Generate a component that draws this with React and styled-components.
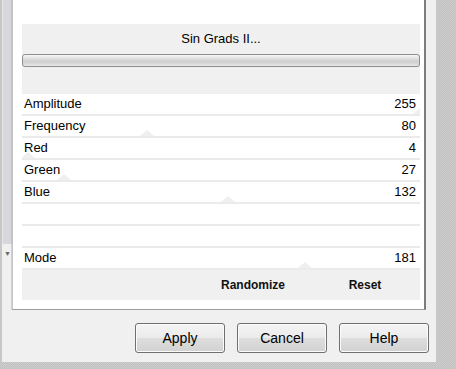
import React from "react";
import styled, { createGlobalStyle } from "styled-components";

const GlobalStyle = createGlobalStyle`
  html, body {
    margin: 0;
    padding: 0;
  }
  body {
    font-family: "Liberation Sans", Arial, sans-serif;
  }
`;

const Page = styled.div`
  width: 456px;
  height: 369px;
  box-sizing: border-box;
  padding-left: 2px;
  overflow: hidden;
  background: repeating-conic-gradient(#c1c1c1 0 25%, #cdcdcd 0 50%) 0 0 / 2px 2px;
`;

const Frame = styled.div`
  width: 434px;
  height: 362px;
  background: #f0f0f0;
  display: flex;
  flex-direction: column;
`;

const Top = styled.div`
  display: flex;
  height: 310px;
`;

const ScrollStrip = styled.div`
  width: 10px;
  display: flex;
  flex-direction: column;
`;

const ScrollThumb = styled.div`
  height: 244px;
  background: #d8d8dc;
  border-left: 1px solid #e6e6e8;
  border-right: 1px solid #c2c2c6;
  box-sizing: border-box;
`;

const ScrollArrow = styled.div`
  flex: 1;
  font-size: 7px;
  line-height: 1;
  color: #6a6a6a;
  padding: 6px 0 0 2px;
  border-right: 1px solid #d0d0d0;
`;

const Panel = styled.div`
  width: 414px;
  box-sizing: border-box;
  background: #fff;
  border-left: 1px solid #c4c4c4;
  border-right: 2px solid #7c7c7c;
  border-bottom: 1px solid #9c9c9c;
  padding: 24px 4px 9px 9px;
  display: flex;
  flex-direction: column;
`;

const Header = styled.div`
  height: 70px;
  background: #f0f0f0;
`;

const Title = styled.div`
  height: 30px;
  line-height: 30px;
  text-align: center;
  font-size: 13px;
  color: #000;
`;

const Bar = styled.div`
  height: 13px;
  box-sizing: border-box;
  border: 1px solid #8e8e8e;
  border-radius: 3px;
  background: linear-gradient(#f7f7f7 0%, #e2e2e2 30%, #cfcfcf 55%, #d8d8d8 80%, #ececec 100%);
`;

const Row = styled.div`
  position: relative;
  height: 22px;
  box-sizing: border-box;
  border-bottom: 2px solid #ebebeb;
  padding: 0 4px 2px 2px;
  display: flex;
  align-items: center;
  justify-content: space-between;
  font-size: 13px;
  color: #000;
  overflow: hidden;
`;

const Marker = styled.span`
  position: absolute;
  bottom: 0;
  width: 0;
  height: 0;
  transform: translateX(-50%);
  border-left: 7px solid transparent;
  border-right: 7px solid transparent;
  border-bottom: 6px solid #efefef;
`;

const Label = styled.span`
  position: relative;
`;

const Value = styled.span`
  position: relative;
`;

const Footer = styled.div`
  height: 30px;
  background: #f0f0f0;
  display: flex;
  justify-content: flex-end;
  align-items: center;
`;

const FooterAction = styled.span`
  width: ${(p) => p.$w}px;
  text-align: center;
  font-size: 12px;
  font-weight: bold;
  color: #111;
`;

const ButtonBar = styled.div`
  flex: 1;
  display: flex;
  justify-content: flex-end;
  align-items: flex-start;
  gap: 12px;
  padding: 13px 7px 0 0;
`;

const Button = styled.button`
  width: 90px;
  height: 30px;
  border: 1px solid #707070;
  border-radius: 3px;
  background: linear-gradient(#f4f4f4 0%, #ebebeb 50%, #dddddd 52%, #d2d2d2 100%);
  box-shadow: inset 0 0 0 1px #fbfbfb;
  font-family: "Liberation Sans", Arial, sans-serif;
  font-size: 14px;
  color: #000;
  padding: 0;
`;

const params = [
  { name: "Amplitude", value: 255 },
  { name: "Frequency", value: 80 },
  { name: "Red", value: 4 },
  { name: "Green", value: 27 },
  { name: "Blue", value: 132 },
  { name: "", value: null },
  { name: "", value: null },
  { name: "Mode", value: 181 },
];

export default function App() {
  return (
    <Page>
      <GlobalStyle />
      <Frame>
        <Top>
          <ScrollStrip>
            <ScrollThumb />
            <ScrollArrow>▼</ScrollArrow>
          </ScrollStrip>
          <Panel>
            <Header>
              <Title>Sin Grads II...</Title>
              <Bar />
            </Header>
            {params.map((p, i) => (
              <Row key={i}>
                {p.value !== null && (
                  <Marker style={{ left: `${(p.value / 255) * 100}%` }} />
                )}
                <Label>{p.name}</Label>
                <Value>{p.value}</Value>
              </Row>
            ))}
            <Footer>
              <FooterAction $w={114}>Randomize</FooterAction>
              <FooterAction $w={110}>Reset</FooterAction>
            </Footer>
          </Panel>
        </Top>
        <ButtonBar>
          <Button>Apply</Button>
          <Button>Cancel</Button>
          <Button>Help</Button>
        </ButtonBar>
      </Frame>
    </Page>
  );
}
